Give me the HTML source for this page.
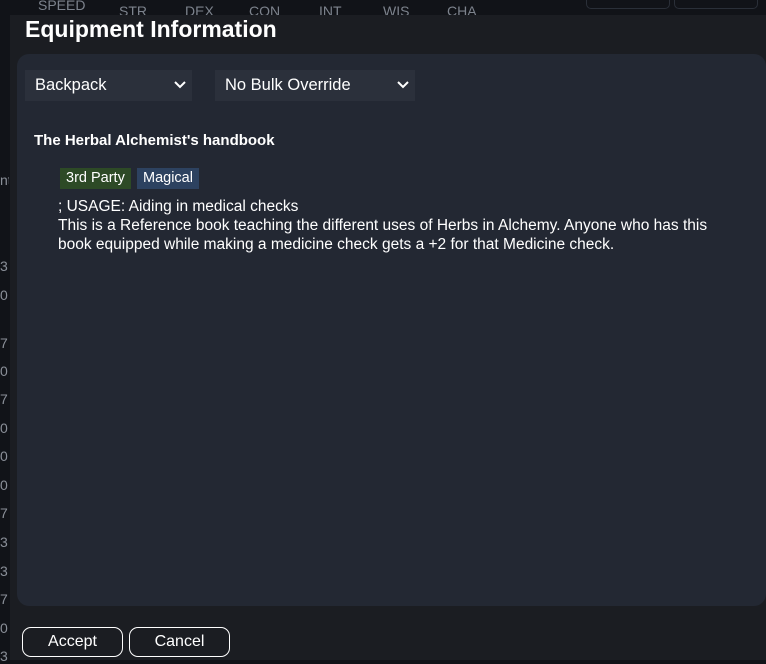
<!DOCTYPE html>
<html><head><style>
body{margin:0;width:766px;height:660px;background:#111318;position:relative;overflow:hidden;font-family:"Liberation Sans",sans-serif;}
.bg{position:absolute;color:#7d838d;font-size:14px;}
.l{position:absolute;left:0;color:#8a8f98;font-size:14px;width:9px;overflow:hidden;}
.modal{position:absolute;left:10px;top:15px;width:756px;height:645px;background:#1b1d22;}
h1{position:absolute;left:15px;top:0;margin:0;font-size:23px;color:#fff;font-weight:bold;line-height:28px;}
.panel{position:absolute;left:7px;top:39px;width:749px;height:552px;background:#232833;border-radius:12px;}
.sel{position:absolute;top:16px;height:31px;background:#2b303b;color:#fff;font-size:16.5px;line-height:31px;padding-left:10px;box-sizing:border-box;}
.sel svg{position:absolute;right:6px;top:11px;}
.title{position:absolute;left:17px;top:78px;color:#fff;font-weight:bold;font-size:15px;}
.tag{position:absolute;top:114px;height:21px;line-height:21px;font-size:14.5px;color:#fff;padding:0 6px;}
.desc{position:absolute;left:41px;top:143px;color:#fff;font-size:15.5px;line-height:19px;width:685px;}
.btn{position:absolute;top:627px;height:30px;border:1px solid #fff;border-radius:9px;color:#fff;font-size:16px;text-align:center;line-height:28px;box-sizing:border-box;width:101px;}
</style></head><body>
<div class="bg" style="left:38px;top:-3px">SPEED</div>
<div class="bg" style="left:119px;top:3px">STR</div>
<div class="bg" style="left:185px;top:3px">DEX</div>
<div class="bg" style="left:249px;top:3px">CON</div>
<div class="bg" style="left:319px;top:3px">INT</div>
<div class="bg" style="left:383px;top:3px">WIS</div>
<div class="bg" style="left:447px;top:3px">CHA</div>
<div style="position:absolute;left:586px;top:-5px;width:82px;height:12px;border:1px solid #2a2f38;border-radius:5px"></div>
<div style="position:absolute;left:674px;top:-5px;width:82px;height:12px;border:1px solid #2a2f38;border-radius:5px"></div>
<div class="l" style="top:172px">nt</div>
<div class="l" style="top:258px">3</div><div class="l" style="top:287px">0</div>
<div class="l" style="top:335px">7</div><div class="l" style="top:363px">0</div><div class="l" style="top:391px">7</div><div class="l" style="top:420px">0</div><div class="l" style="top:448px">0</div><div class="l" style="top:477px">0</div><div class="l" style="top:505px">7</div><div class="l" style="top:534px">3</div><div class="l" style="top:563px">3</div><div class="l" style="top:591px">7</div><div class="l" style="top:620px">0</div><div class="l" style="top:648px">3</div>
<div class="modal">
<h1>Equipment Information</h1>
<div class="panel">
<div class="sel" style="left:8px;width:167px">Backpack<svg width="12" height="8" viewBox="0 0 12 8"><path d="M1 1l5 5 5-5" stroke="#fff" stroke-width="2" fill="none"/></svg></div>
<div class="sel" style="left:198px;width:200px">No Bulk Override<svg width="12" height="8" viewBox="0 0 12 8"><path d="M1 1l5 5 5-5" stroke="#fff" stroke-width="2" fill="none"/></svg></div>
<div class="title">The Herbal Alchemist's handbook</div>
<div class="tag" style="left:43px;background:#2d4a26">3rd Party</div>
<div class="tag" style="left:120px;background:#2d4260">Magical</div>
<div class="desc">; USAGE: Aiding in medical checks<br>This is a Reference book teaching the different uses of Herbs in Alchemy. Anyone who has this book equipped while making a medicine check gets a +2 for that Medicine check.</div>
</div>
</div>
<div class="btn" style="left:22px">Accept</div>
<div class="btn" style="left:129px">Cancel</div>
</body></html>
